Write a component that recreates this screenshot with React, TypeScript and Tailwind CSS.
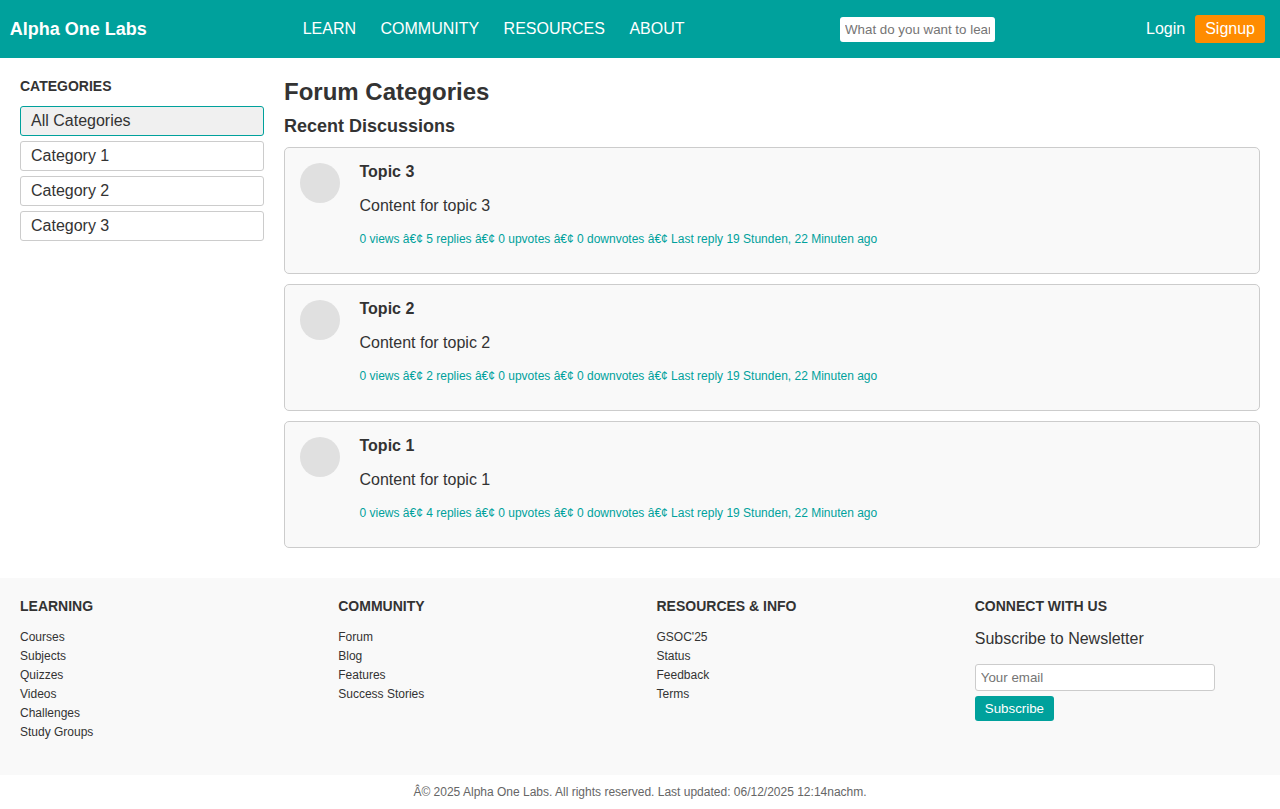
const nav = ['LEARN', 'COMMUNITY', 'RESOURCES', 'ABOUT'];
const categories = ['All Categories', 'Category 1', 'Category 2', 'Category 3'];
const topics = [
  { id: 3, replies: 5 },
  { id: 2, replies: 2 },
  { id: 1, replies: 4 },
];
const columns = [
  { title: 'LEARNING', links: ['Courses', 'Subjects', 'Quizzes', 'Videos', 'Challenges', 'Study Groups'] },
  { title: 'COMMUNITY', links: ['Forum', 'Blog', 'Features', 'Success Stories'] },
  { title: 'RESOURCES & INFO', links: ["GSOC'25", 'Status', 'Feedback', 'Terms'] },
];

function Header() {
  return (
    <header className="flex h-[58px] items-center bg-[#00a19c] pl-[9.7px] pr-[15px] text-white">
      <div className="w-[137px] shrink-0 text-[18px] leading-[21px] font-bold whitespace-nowrap">Alpha One Labs</div>
      <nav className="ml-[156px] flex w-[537.3px] shrink-0 gap-[24.45px]">
        {nav.map((n) => (
          <a key={n} href="#">{n}</a>
        ))}
      </nav>
      <input
        className="h-[25px] w-[155px] rounded-[3px] bg-white px-[5px] text-[13.333px] text-black placeholder:text-[#757575]"
        placeholder="What do you want to learn?"
      />
      <div className="ml-auto flex items-center gap-[10px]">
        <a href="#">Login</a>
        <a href="#" className="rounded-[3px] bg-[#ff8c00] px-[10px] py-[5px]">Signup</a>
      </div>
    </header>
  );
}

function Topic({ id, replies }: { id: number; replies: number }) {
  return (
    <article className="flex h-[127px] gap-[19.5px] rounded-[5px] border border-[#ccc] bg-[#f9f9f9] p-[15px]">
      <div className="size-10 shrink-0 rounded-full bg-[#e0e0e0]" />
      <div>
        <h3 className="font-bold">Topic {id}</h3>
        <p className="mt-4">Content for topic {id}</p>
        <p className="mt-[17px] text-[12px] leading-[14px] text-[#00a19c]">
          0 views â€¢ {replies} replies â€¢ 0 upvotes â€¢ 0 downvotes â€¢ Last reply 19 Stunden, 22 Minuten ago
        </p>
      </div>
    </article>
  );
}

export default function App() {
  return (
    <div className="h-[809px] overflow-hidden bg-white font-['Liberation_Sans',Arial,sans-serif] text-[16px] leading-[18px] text-[#333]">
      <Header />
      <main className="flex h-[520px] gap-5 px-5 pt-5">
        <aside className="w-[244px] shrink-0">
          <h2 className="mb-3 text-[14px] leading-4 font-bold">CATEGORIES</h2>
          <ul className="flex flex-col gap-[5px]">
            {categories.map((c, i) => (
              <li key={c} className={`h-[30px] rounded-[3px] border px-[10px] py-[5px] ${i === 0 ? 'border-[#00a19c] bg-[#f0f0f0]' : 'border-[#ccc] bg-white'}`}>
                {c}
              </li>
            ))}
          </ul>
        </aside>
        <section className="flex-1">
          <h1 className="text-[24px] leading-[27px] font-bold">Forum Categories</h1>
          <h2 className="mt-[11px] text-[18px] leading-[21px] font-bold">Recent Discussions</h2>
          <div className="mt-[10px] flex flex-col gap-[10px]">
            {topics.map((t) => (
              <Topic key={t.id} {...t} />
            ))}
          </div>
        </section>
      </main>
      <footer>
        <div className="flex h-[197px] bg-[#f9f9f9] px-5 pt-5">
          {columns.map((c) => (
            <div key={c.title} className="w-[318.25px] shrink-0">
              <h4 className="text-[14px] leading-4 font-bold">{c.title}</h4>
              <ul className="mt-4 flex flex-col gap-[5px] text-[12px] leading-[14px]">
                {c.links.map((l) => (
                  <li key={l}>{l}</li>
                ))}
              </ul>
            </div>
          ))}
          <div className="w-[240px]">
            <h4 className="text-[14px] leading-4 font-bold">CONNECT WITH US</h4>
            <p className="mt-4">Subscribe to Newsletter</p>
            <input
              className="mt-4 block h-[27px] w-[240px] rounded-[3px] border border-[#ccc] bg-white px-[5px] text-[13.333px] placeholder:text-[#757575]"
              placeholder="Your email"
            />
            <button className="mt-[5px] block h-[25px] rounded-[3px] bg-[#00a19c] px-[10px] text-[13.333px] leading-[15px] text-white">
              Subscribe
            </button>
          </div>
        </div>
        <p className="pt-[10px] text-center text-[12px] leading-[14px] text-[#666]">
          Â© 2025 Alpha One Labs. All rights reserved. Last updated: 06/12/2025 12:14nachm.
        </p>
      </footer>
    </div>
  );
}
